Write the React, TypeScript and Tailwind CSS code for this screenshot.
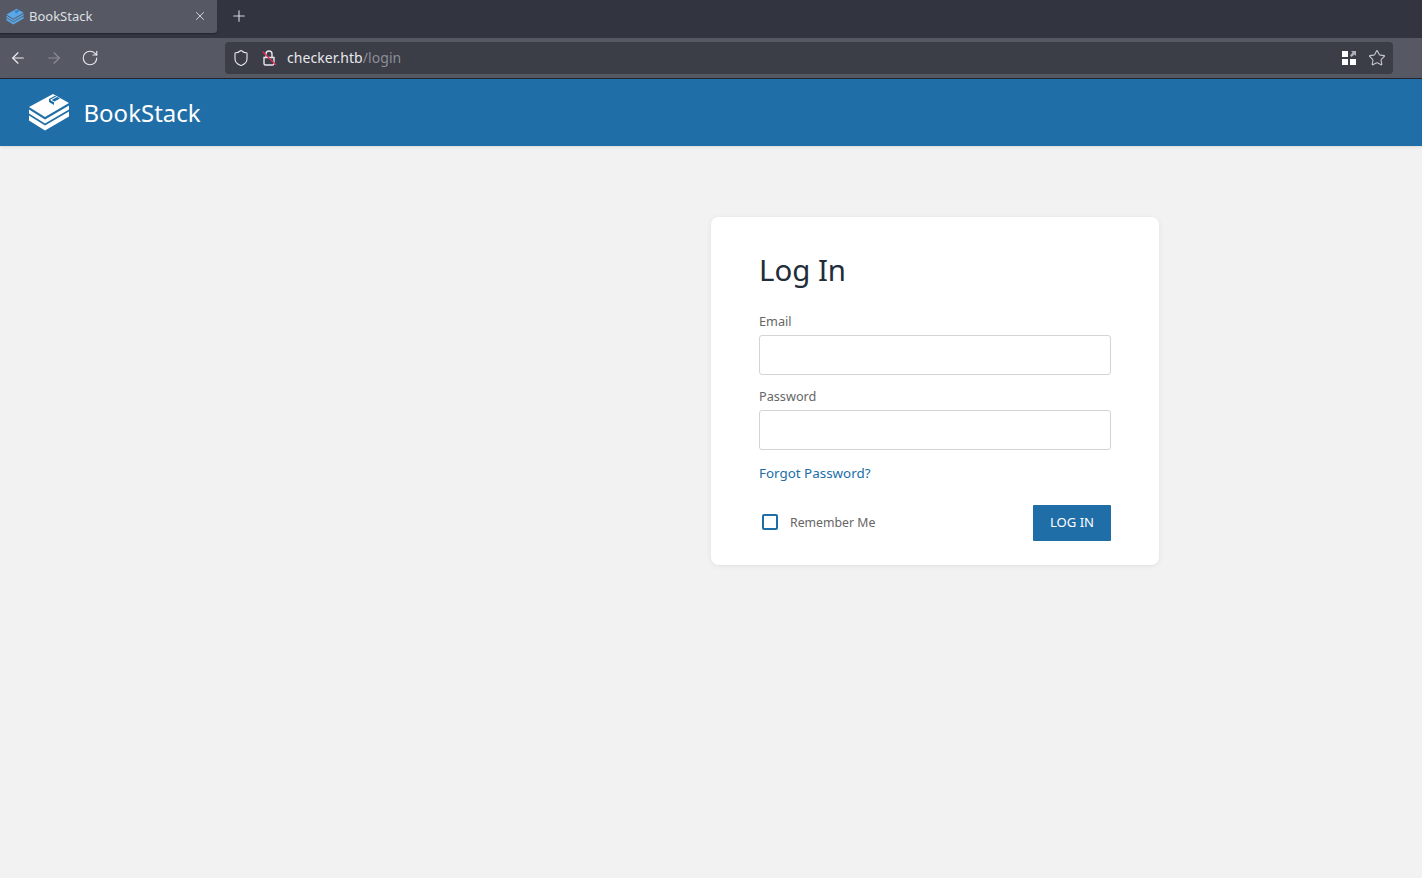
import React from 'react';
import { ArrowLeft, ArrowRight, RotateCw, Shield, Star, Plus, X } from 'lucide-react';

const BookStackLogo: React.FC<{ size: number; color: string; line: string }> = ({ size, color, line }) => (
  <svg width={size} height={size} viewBox="0 0 42 42" aria-hidden>
    <path d="M1 23.500l16 10 24-14v5L17 38.500l-16-10z" fill={color} />
    <path d="M1 17.500l16 10 24-14v4L17 31.500l-16-10z" fill={color} />
    <path d="M1 15L25 2l16 9-24 14z" fill={color} />
    <path d="M21 7l6-3.300 5 2.800-6 3.300v3.200l-5-3z" fill={line} />
    <path d="M23 7.800l6-3.300M26 9.800L22.500 7.800" stroke={color} strokeWidth="1" fill="none" />
  </svg>
);

const StruckLock: React.FC = () => (
  <svg width="18" height="18" viewBox="0 0 18 18" fill="none" aria-hidden>
    <path d="M4 8.500h10v6a1.500 1.500 0 0 1-1.500 1.500h-7A1.500 1.500 0 0 1 4 14.500z" stroke="#e8e8ec" strokeWidth="1.400" />
    <path d="M6 8.500V5a3 3 0 0 1 6 0v3.500" stroke="#e8e8ec" strokeWidth="1.400" />
    <path d="M2.500 2.500L16 16" stroke="#e22850" strokeWidth="1.200" />
  </svg>
);

const Field: React.FC<{ label: string; id: string; type: string }> = ({ label, id, type }) => (
  <div>
    <label htmlFor={id} className="block h-[28px] pt-[2px] text-[12.700px] leading-[24px] text-[#666]">
      {label}
    </label>
    <input
      id={id}
      type={type}
      className="block h-[40px] w-full rounded-[3px] border border-[#d4d4d4] bg-white"
    />
  </div>
);

export default function App() {
  return (
    <div className="flex min-h-[878px] flex-col bg-[#f2f2f2] font-['Noto_Sans',sans-serif]">
      {/* tab strip */}
      <div className="flex h-[38px] items-start bg-[#32343f]">
        <div className="flex h-[33px] w-[217px] items-center rounded-br-[3px] bg-[#565863] pl-[6px] pr-[10px] shadow-[0_1px_1px_rgba(0,0,0,0.3)]">
          <BookStackLogo size={18} color="#5aa6e6" line="#2f78b8" />
          <span className="ml-[5px] text-[13px] text-[#dfe0e6]">BookStack</span>
          <X size={14} strokeWidth={1.500} className="ml-auto mb-[2px] text-[#e4e4e8]" />
        </div>
        <Plus size={18} strokeWidth={1.500} className="ml-[13px] mt-[7px] text-[#d6d7dc]" />
      </div>

      {/* toolbar */}
      <div className="flex h-[41px] items-center border-b border-[#25262c] bg-[#565863] pl-[9px] pr-[29px]">
        <ArrowLeft size={18} strokeWidth={1.500} className="text-[#f0f0f4]" />
        <ArrowRight size={18} strokeWidth={1.500} className="ml-[18px] text-[#8d8e97]" />
        <RotateCw size={18} strokeWidth={1.500} className="ml-[18px] text-[#e8e8ec]" />
        <div className="ml-[126px] flex h-[32px] flex-1 items-center rounded-[4px] bg-[#3b3d47] pl-[7px] pr-[7px]">
          <Shield size={18} strokeWidth={1.500} className="text-[#e8e8ec]" />
          <span className="ml-[10px] block h-[18px] w-[18px]">
            <StruckLock />
          </span>
          <span className="ml-[9px] mb-[1px] text-[14px] tracking-[0.07px] text-[#e8e8ec]">
            checker.htb<span className="text-[#8d8e97]">/login</span>
          </span>
          <div className="ml-auto grid grid-cols-[6px_6px] grid-rows-[6px_6px] gap-[2px]">
            <span className="block bg-white" />
            <svg viewBox="0 0 6 6" className="block h-[6px] w-[6px]" aria-hidden>
              <path d="M1 0h5v5L4.500 3.500 1.500 6 0 4.500 2.500 1.500z" fill="#b0b1b8" />
            </svg>
            <span className="block bg-white" />
            <span className="block bg-white" />
          </div>
          <Star size={18} strokeWidth={1.500} className="ml-[12px] text-[#c4c5cb]" />
        </div>
      </div>

      {/* app header */}
      <header className="flex h-[67px] items-center bg-[#206ea7] pl-[28px] shadow-[0_1px_3px_rgba(0,0,0,0.1)]">
        <BookStackLogo size={42} color="#ffffff" line="#206ea7" />
        <span className="ml-[13.500px] text-[24px] text-white">BookStack</span>
      </header>

      {/* login */}
      <main className="flex flex-1 pl-[711px] pt-[71px]">
        <div className="h-[348px] w-[448px] rounded-[8px] bg-white px-[48px] pt-[29px] shadow-[0_1px_6px_-1px_rgba(0,0,0,0.1)]">
          <h1 className="h-[48px] text-[29.400px] font-normal leading-[48px] text-[#222d3a]">Log In</h1>
          <div className="mt-[13px]">
            <Field label="Email" id="email" type="text" />
          </div>
          <div className="mt-[7px]">
            <Field label="Password" id="password" type="password" />
          </div>
          <a href="#" className="mt-[11px] block h-[24px] text-[13.400px] leading-[24px] text-[#206ea7]">
            Forgot Password?
          </a>
          <div className="mt-[20px] flex items-center justify-between">
            <label className="flex items-center pl-[3px]">
              <span className="block h-[16px] w-[16px] -translate-y-px rounded-[2px] border-2 border-[#206ea7]" />
              <span className="ml-[12px] text-[12.300px] text-[#666]">Remember Me</span>
            </label>
            <button className="h-[36px] w-[78px] rounded-[1px] bg-[#206ea7] text-[13.100px] text-white">LOG IN</button>
          </div>
        </div>
      </main>
    </div>
  );
}
